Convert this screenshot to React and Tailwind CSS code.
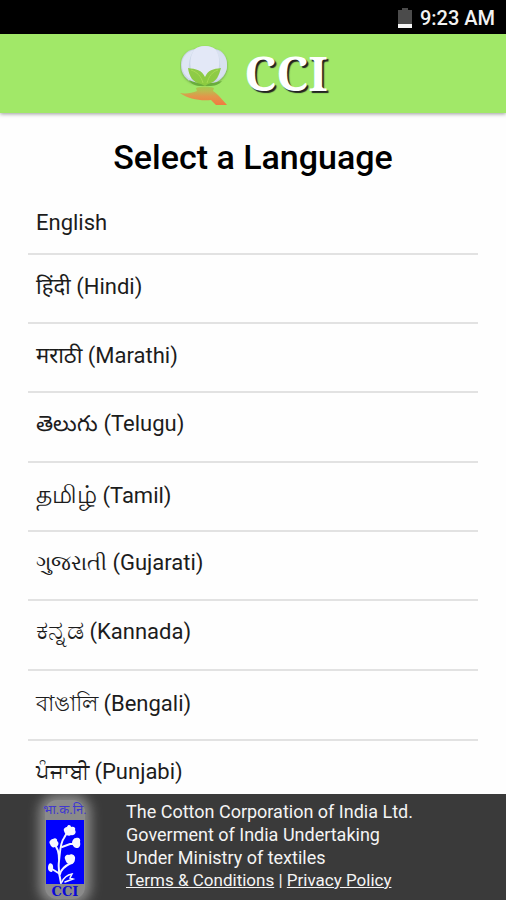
const languages = [
  { id: 'en', native: 'English', row: 'h-16 pt-[2px]', script: 'text-[22px]' },
  { id: 'hi', native: 'हिंदी', name: 'Hindi', row: 'h-[69px] pb-[3px]', script: 'text-[22px]' },
  { id: 'mr', native: 'मराठी', name: 'Marathi', row: 'h-[69px] pb-[3px]', script: 'text-[22px]' },
  { id: 'te', native: 'తెలుగు', name: 'Telugu', row: 'h-[70px] pb-[6px]', script: 'text-[22px]' },
  { id: 'ta', native: 'தமிழ்', name: 'Tamil', row: 'h-[69px] pb-[3px]', script: 'text-[25px] font-medium' },
  { id: 'gu', native: 'ગુજરાતી', name: 'Gujarati', row: 'h-[69px] pb-[6px]', script: 'text-[21px]' },
  { id: 'kn', native: 'ಕನ್ನಡ', name: 'Kannada', row: 'h-[70px] pb-2', script: 'text-[27px] font-medium' },
  { id: 'bn', native: 'বাঙালি', name: 'Bengali', row: 'h-[70px] pb-[3px]', script: 'text-[22px]' },
  { id: 'pa', native: 'ਪੰਜਾਬੀ', name: 'Punjabi', row: 'h-[70px] pb-[6px]', script: 'text-[21px]' },
];

function BatteryIcon() {
  return (
    <svg className="h-5 w-[14px]" viewBox="0 0 14 20" aria-hidden="true">
      <path d="M4 0h6v2h4v18H0V2h4z" fill="#4b4b4b" />
      <path d="M0 16h14v4H0z" fill="#f5f5f5" />
    </svg>
  );
}

function CottonLogo() {
  return (
    <svg className="h-[62px] w-[50px]" viewBox="0 0 50 62" aria-hidden="true">
      <defs>
        <linearGradient id="hand" gradientUnits="userSpaceOnUse" x1="0" y1="42" x2="0" y2="61">
          <stop offset="0" stopColor="#a0cf4f" />
          <stop offset="0.3" stopColor="#c2b54e" />
          <stop offset="0.55" stopColor="#e2964b" />
          <stop offset="1" stopColor="#f07c40" />
        </linearGradient>
        <linearGradient id="leaf" x1="0" y1="0" x2="0" y2="1">
          <stop offset="0" stopColor="#8fcb49" />
          <stop offset="1" stopColor="#8ccb40" />
        </linearGradient>
        <filter id="soft" x="-20%" y="-20%" width="140%" height="140%">
          <feDropShadow dx="0" dy="1" stdDeviation="1" floodColor="#496b35" floodOpacity="0.6" />
        </filter>
      </defs>
      <g filter="url(#soft)">
        <path d="M15 5c3-2 6-3 10-3s7 1 10 3c8 1 12 8 12 16 0 9-5 15-13 18H14C6 36 1 30 1 21 1 13 6 6 15 5z" fill="#ccd7e8" />
        <path d="M14 6C6 8 2 14 2 21c0 7 4 12 10 15C7 26 8 15 14 6z" fill="#dfe6f4" />
        <path d="M36 6c7 2 11 8 11 15s-4 12-10 15c5-10 4-21-1-30z" fill="#d9e1f0" />
        <path d="M14 6c3-3 7-4 11-4s8 1 11 4c5 8 4 19-1 28H15C9 25 9 14 14 6z" fill="#e3e8f7" />
      </g>
      <path d="M9 36c4 2 8 3 13 3h7c5 0 9-1 13-2-3 4-8 5-13 5h-8c-5 0-10-2-12-6z" fill="#69ad3c" />
      <path d="M8 24c8 1 14 2 17 9 3-7 8-8 16-9-2 7-4 14-13 16l-3 2-4-2c-8-1-12-8-13-16z" fill="url(#leaf)" />
      <path d="M11 26c6 2 10 6 12 13M38 26c-6 2-9 6-11 13" fill="none" stroke="#a7db54" strokeWidth="1" />
      <path d="M0 49c6 1 12 0 17-2l-1-3c5-2 13-2 18 0l-1 3c2 1 4 3 6 5l8 9H36l-5-5C20 57 8 55 0 49z" fill="url(#hand)" />
    </svg>
  );
}

function CorporationLogo() {
  return (
    <div className="relative isolate flex h-[99px] w-10 flex-col items-center">
      <div className="absolute inset-0 -z-10 rounded-xl bg-[#8a8a8a] shadow-[0_0_12px_6px_#8a8a8a]" />
      <span className="text-[13px] leading-5 whitespace-nowrap text-[#4038d0]">भा.क.नि.</span>
      <svg className="h-16 w-[38px] shrink-0" viewBox="1 18 38 64" aria-hidden="true">
        <rect x="1" y="18" width="38" height="64" fill="#0000fe" />
        <g fill="none" stroke="#f3f4ff" strokeWidth="2" strokeLinecap="round">
          <path d="M16 81c-2-8-3-14-2-22s1-18 5-23l4-7" />
          <path d="M14 57C14 50 13 46 9 42M17 45l8-3 8 0" />
          <path d="M15 72l-8-5M15 72c1-5 5-8 11-11" />
          <path d="M17 80c2-5 5-7 10-8l-2 4 3 1-8 3" strokeWidth="1.5" />
        </g>
        <g fill="#f7f8ff">
          <path d="M19 29c-1-3 2-4 3-4 1-3 4-2 4 0 3-1 5 1 4 3 2 3-1 6-4 5-2 2-6 0-7-4z" />
          <path d="M5 42c-2-3 2-5 3-5 2-2 5 0 4 2 3 2 1 6-2 6-2 1-4 0-5-3z" />
          <path d="M27 41c0-3 2-5 4-5 3-1 5 1 4 4 1 4-1 6-3 6-2 0-4-1-5-5z" />
          <path d="M20 57c-1-3 2-5 4-4 3-2 7 1 6 4 0 4-3 6-5 5-3 0-4-2-5-5z" />
          <path d="M3 66c0-4 2-6 4-4 2 2 1 6 0 8-3 0-4-2-4-4z" />
        </g>
      </svg>
      <span className="font-['DejaVu_Serif',serif] text-[13px] leading-4 font-bold text-[#0b08d8]">CCI</span>
    </div>
  );
}

export default function App() {
  return (
    <div className="flex h-screen flex-col overflow-hidden bg-[#fefefe] font-['Roboto','Noto_Sans',sans-serif] text-black">
      <div className="flex h-[34px] shrink-0 items-center justify-end gap-2 bg-black pt-[2px] pr-[11px]">
        <BatteryIcon />
        <time className="text-xl leading-6 font-medium text-[#f2f2f2]">9:23 AM</time>
      </div>

      <header className="flex h-[79px] shrink-0 items-center justify-center gap-[14px] bg-[#a1e868] pt-[2px] pl-[2px] shadow-[0_1px_4px_#00000066]">
        <CottonLogo />
        <span className="pb-1 font-['Noto_Serif','DejaVu_Serif',serif] text-5xl font-bold text-white [text-shadow:2px_2px_1px_#222222]">
          CCI
        </span>
      </header>

      <main className="flex min-h-0 flex-1 flex-col overflow-hidden px-7">
        <h1 className="pt-6 text-center text-[34px] leading-10 font-medium">Select a Language</h1>
        <ul className="mt-[14px]">
          {languages.map(({ id, native, name, row, script }) => (
            <li key={id} className={`border-b-2 border-[#e2e2e2] ${row}`}>
              <button type="button" className="flex h-full w-full items-center px-2 text-left text-[22px] leading-7 text-[#1c1c1c]">
                <span className="whitespace-pre">
                  <span lang={id} className={script}>{native}</span>
                  {name ? ` (${name})` : ''}
                </span>
              </button>
            </li>
          ))}
        </ul>
      </main>

      <footer className="flex h-[106px] shrink-0 gap-[41px] overflow-hidden bg-[#3a3a3a] pt-[6px] pl-[45px] text-lg leading-[23px] text-[#f4f4f4]">
        <CorporationLogo />
        <div>
          <p>The Cotton Corporation of India Ltd.</p>
          <p>Goverment of India Undertaking</p>
          <p>Under Ministry of textiles</p>
          <p className="text-[17px]">
            <a href="#terms" className="underline">Terms &amp; Conditions</a>
            {' | '}
            <a href="#privacy" className="underline">Privacy Policy</a>
          </p>
        </div>
      </footer>
    </div>
  );
}
